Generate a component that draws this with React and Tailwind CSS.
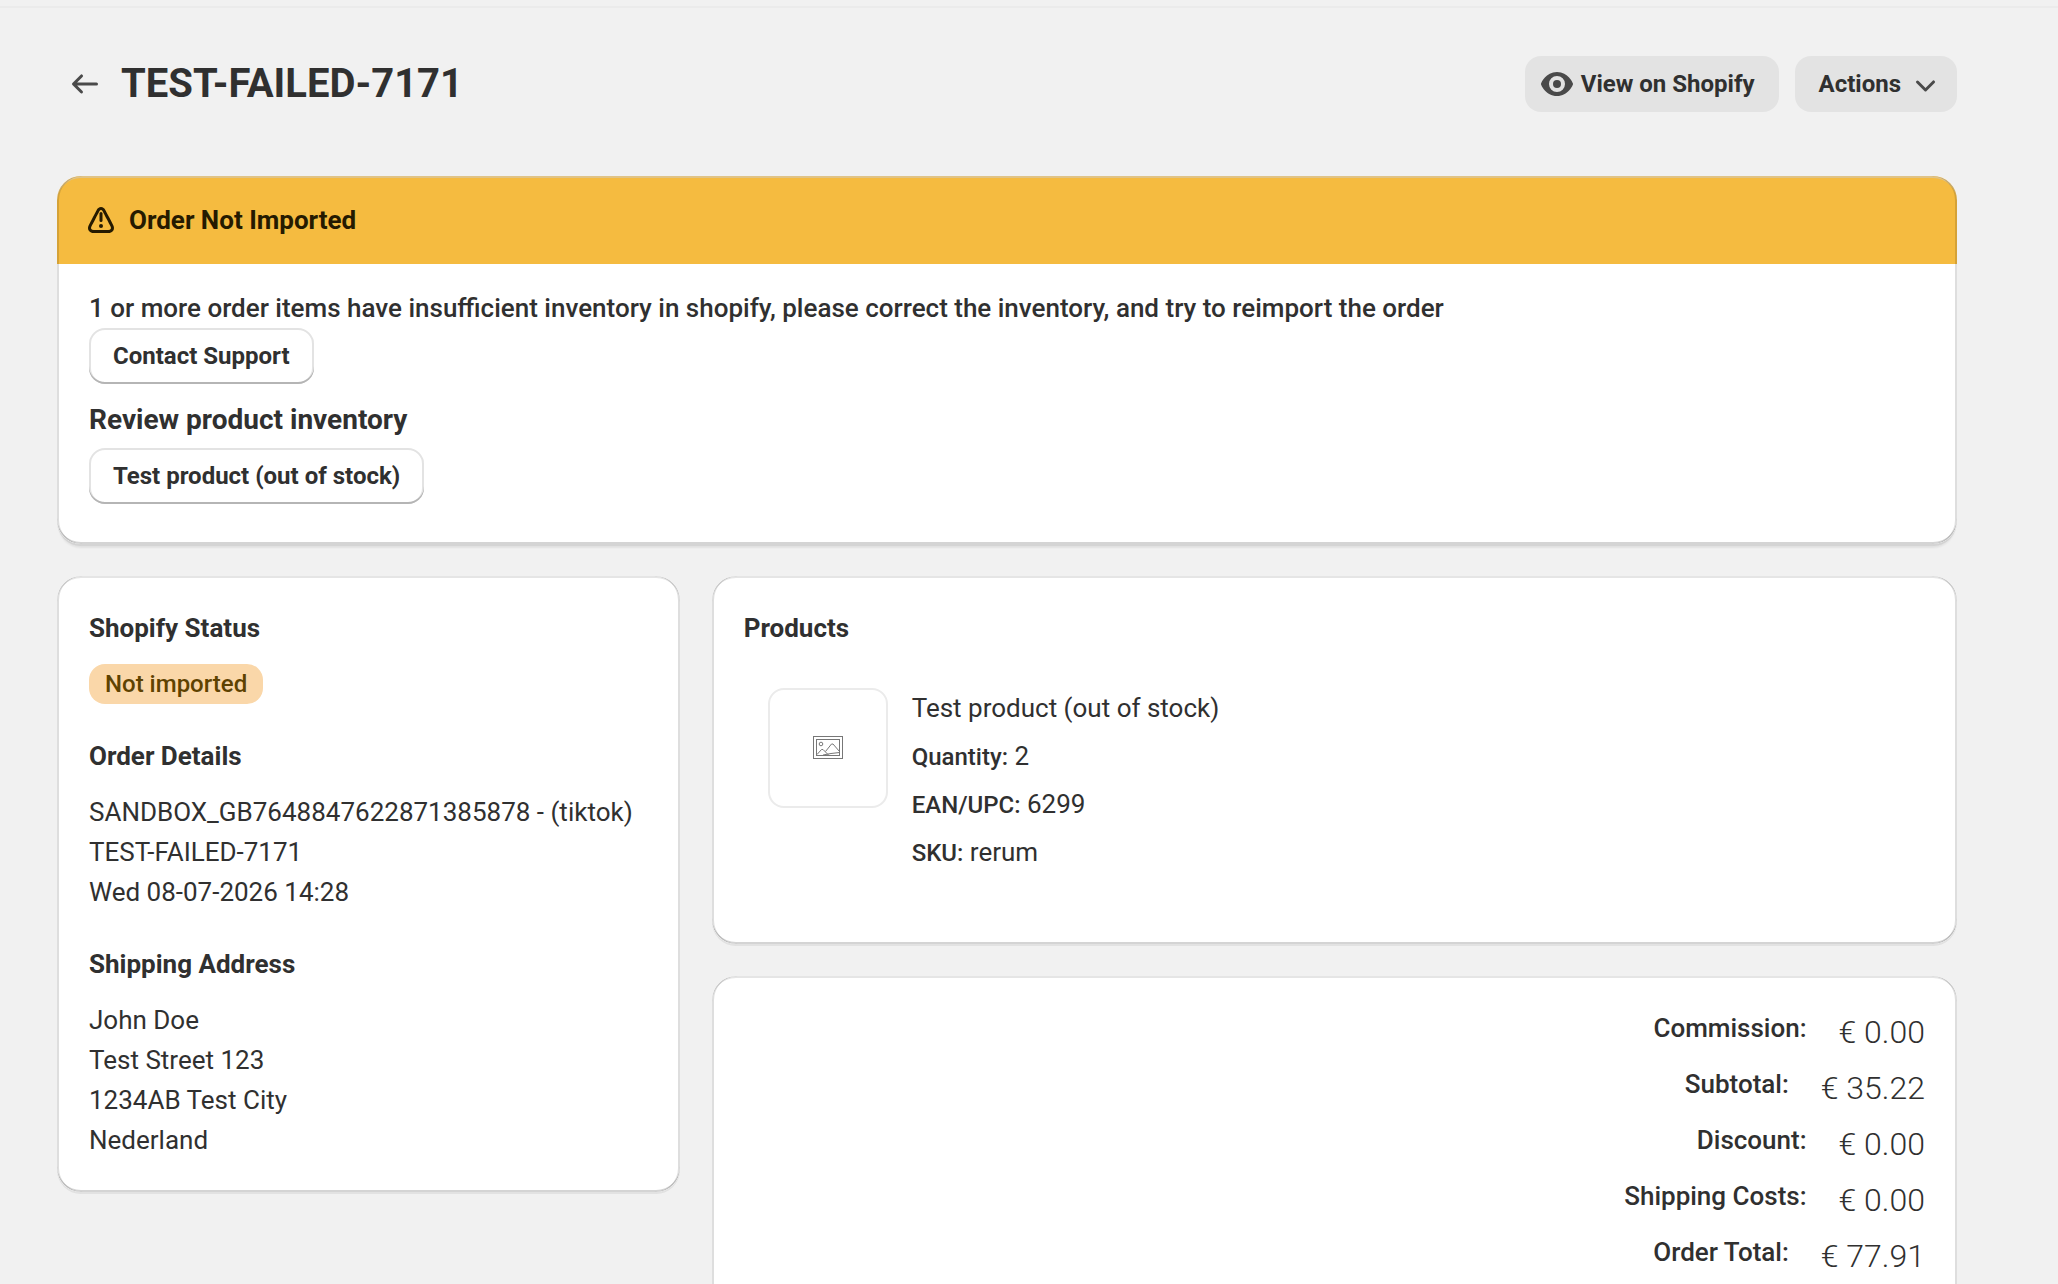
const order = {
  name: "TEST-FAILED-7171",
  details: ["SANDBOX_GB7648847622871385878 - (tiktok)", "TEST-FAILED-7171", "Wed 08-07-2026 14:28"],
  address: ["John Doe", "Test Street 123", "1234AB Test City", "Nederland"],
  product: {
    title: "Test product (out of stock)",
    fields: [
      { label: "Quantity:", value: "2" },
      { label: "EAN/UPC:", value: "6299" },
      { label: "SKU:", value: "rerum" },
    ],
  },
  totals: [
    { label: "Commission:", value: "€ 0.00" },
    { label: "Subtotal:", value: "€ 35.22" },
    { label: "Discount:", value: "€ 0.00" },
    { label: "Shipping Costs:", value: "€ 0.00" },
    { label: "Order Total:", value: "€ 77.91" },
  ],
};

function ArrowLeftIcon() {
  return (
    <svg viewBox="0 0 20 20" className="size-10" fill="#4a4a4a" aria-hidden="true">
      <path fillRule="evenodd" d="M16.5 10a.75.75 0 0 1-.75.75h-9.69l2.72 2.72a.75.75 0 0 1-1.06 1.06l-4-4a.75.75 0 0 1 0-1.06l4-4a.75.75 0 1 1 1.06 1.06l-2.72 2.72h9.69a.75.75 0 0 1 .75.75Z" />
    </svg>
  );
}

function EyeIcon() {
  return (
    <svg viewBox="0 0 20 20" className="size-10" fill="#4a4a4a" aria-hidden="true">
      <path fillRule="evenodd" d="M17.93 9.63C17.85 9.43 15.65 4 10 4S2.15 9.43 2.07 9.63a1 1 0 0 0 0 .74C2.15 10.57 4.35 16 10 16s7.85-5.43 7.93-5.63a1 1 0 0 0 0-.74ZM10 14a4 4 0 1 1 0-8 4 4 0 0 1 0 8Z" />
      <circle cx="10" cy="10" r="2" />
    </svg>
  );
}

function ChevronDownIcon() {
  return (
    <svg viewBox="0 0 20 20" className="size-10" fill="#4a4a4a" aria-hidden="true">
      <path fillRule="evenodd" d="M5.72 8.47a.75.75 0 0 1 1.06 0l3.47 3.47 3.47-3.47a.75.75 0 1 1 1.06 1.06l-4 4a.75.75 0 0 1-1.06 0l-4-4a.75.75 0 0 1 0-1.06Z" />
    </svg>
  );
}

function AlertIcon() {
  return (
    <svg viewBox="0 0 20 20" className="size-10" fill="#251a00" aria-hidden="true">
      <path d="M10 6a.75.75 0 0 1 .75.75v3.5a.75.75 0 0 1-1.5 0v-3.5A.75.75 0 0 1 10 6Z" />
      <path d="M11 13a1 1 0 1 1-2 0 1 1 0 0 1 2 0Z" />
      <path fillRule="evenodd" d="M10 3.5c-1.045 0-1.784.702-2.152 1.447a449.26 449.26 0 0 1-2.005 3.847l-.028.052a403.426 403.426 0 0 0-2.008 3.856c-.372.752-.478 1.75.093 2.614.57.863 1.542 1.184 2.464 1.184h7.272c.922 0 1.895-.32 2.464-1.184.57-.864.465-1.862.093-2.614a402.6 402.6 0 0 0-2.03-3.899l-.007-.013a444.43 444.43 0 0 1-2.004-3.843C11.784 4.202 11.045 3.5 10 3.5Zm-.808 2.112c.404-.816 1.212-.816 1.616 0 .526 1.064 1.263 2.465 2.017 3.898l.006.011c.74 1.408 1.494 2.844 2.018 3.846.404.816 0 1.633-1.213 1.633H6.364c-1.212 0-1.616-.817-1.212-1.633.527-1.065 1.266-2.47 2.024-3.911 .752-1.43 1.49-2.832 2.016-3.844Z" />
    </svg>
  );
}

function MissingImageIcon() {
  return (
    <svg viewBox="0 0 30 24" className="h-6 w-[30px]" fill="none" stroke="#777" strokeWidth="1" aria-hidden="true">
      <rect x="0.5" y="0.5" width="29" height="22" />
      <rect x="3.500" y="3.500" width="23" height="16" />
      <circle cx="8" cy="8" r="1.800" />
      <path d="M4 18.500L8.500 13.500H10L15.500 19M12.500 15.500L18.500 8H20L26.500 15.500M10 19L18 17.500L26.500 16.500" />
    </svg>
  );
}

function Card({ className = "", children }) {
  return (
    <section
      className={`relative overflow-hidden rounded-3xl bg-white after:pointer-events-none after:absolute after:inset-0 after:rounded-3xl after:shadow-[inset_2px_0_0_rgba(0,0,0,0.13),inset_-2px_0_0_rgba(0,0,0,0.13),inset_0_-2px_0_rgba(0,0,0,0.17),inset_0_2px_0_rgba(204,204,204,0.5)] ${className}`}
    >
      {children}
    </section>
  );
}

function OutlineButton({ children }) {
  return (
    <button
      type="button"
      className="h-14 rounded-2xl bg-white px-6 text-2xl font-bold shadow-[inset_0_-2px_0_#b5b5b5,inset_0_0_0_2px_#e3e3e3]"
    >
      {children}
    </button>
  );
}

function Section({ title, children }) {
  return (
    <div className="flex flex-col items-start gap-4">
      <h2 className="text-[26px] leading-10 font-bold">{title}</h2>
      {children}
    </div>
  );
}

export default function App() {
  return (
    <div className="h-screen overflow-y-auto bg-[#f1f1f1] pt-1.5 font-[Roboto,sans-serif] text-[26px] leading-10 text-[#303030] [scrollbar-width:none]">
      <div className="border-t-2 border-[#ebebeb] pt-12 pr-[101px] pl-[57px]">
        {/* Page header */}
        <header className="flex items-center justify-between pl-2">
          <div className="flex items-center gap-4">
            <a href="#orders" aria-label="Back to orders">
              <ArrowLeftIcon />
            </a>
            <h1 className="text-[40px] leading-12 font-bold">{order.name}</h1>
          </div>
          <div className="flex gap-4 text-2xl font-bold">
            <button type="button" className="flex h-14 items-center gap-1 rounded-2xl bg-[#e3e3e3] pr-6 pl-3">
              <EyeIcon />
              View on Shopify
            </button>
            <button type="button" className="flex h-14 items-center gap-1 rounded-2xl bg-[#e3e3e3] pr-3 pl-6">
              Actions
              <ChevronDownIcon />
            </button>
          </div>
        </header>

        <main className="flex flex-col gap-8 pt-16 pb-8">
          {/* Import warning */}
          <div className="rounded-3xl shadow-[0_2px_0_rgba(26,26,26,0.07),0_6px_2px_-2px_rgba(26,26,26,0.07)]">
            <Card>
              <div className="flex items-center gap-2 bg-[#f5bb40] p-6 text-[#251a00]">
                <AlertIcon />
                <h2 className="font-bold">Order Not Imported</h2>
              </div>
              <div className="flex flex-col items-start px-8 pt-6 pb-10">
                <p className="font-medium">
                  1 or more order items have insufficient inventory in shopify, please correct the inventory, and try to reimport the order
                </p>
                <OutlineButton>Contact Support</OutlineButton>
                <h3 className="pt-4 pb-2 text-[28px] leading-10 font-bold">Review product inventory</h3>
                <OutlineButton>{order.product.title}</OutlineButton>
              </div>
            </Card>
          </div>

          <div className="grid grid-cols-[1fr_2fr] items-start gap-8">
            <div className="rounded-3xl shadow-[0_2px_0_rgba(26,26,26,0.07)]">
              <Card className="flex flex-col gap-8 p-8">
                <Section title="Shopify Status">
                  <span className="rounded-2xl bg-[#fad7a9] px-4 text-2xl leading-10 font-medium text-[#5e4200]">Not imported</span>
                </Section>
                <Section title="Order Details">
                  <div>
                    {order.details.map(line => <p key={line}>{line}</p>)}
                  </div>
                </Section>
                <Section title="Shipping Address">
                  <address className="not-italic">
                    {order.address.map(line => <p key={line}>{line}</p>)}
                  </address>
                </Section>
              </Card>
            </div>

            <div className="flex flex-col gap-8">
              <div className="rounded-3xl shadow-[0_2px_0_rgba(26,26,26,0.07)]">
                <Card className="px-8 pt-8 pb-12">
                  <Section title="Products">
                    <div className="flex items-start gap-6 p-6">
                      <div className="flex size-30 items-center justify-center rounded-2xl border-2 border-[#ebebeb]">
                        <MissingImageIcon />
                      </div>
                      <div className="flex flex-col gap-2">
                        <p>{order.product.title}</p>
                        {order.product.fields.map(field => (
                          <p key={field.label}>
                            <span className="text-2xl leading-8 font-medium">{field.label}</span> {field.value}
                          </p>
                        ))}
                      </div>
                    </div>
                  </Section>
                </Card>
              </div>

              <div className="rounded-3xl shadow-[0_2px_0_rgba(26,26,26,0.07)]">
                <Card className="flex flex-col gap-2 p-8">
                  {order.totals.map(row => (
                    <div key={row.label} className="flex items-start justify-end gap-8">
                      <span className="font-medium">{row.label}</span>
                      <span className="text-[32px] leading-12 font-light">{row.value}</span>
                    </div>
                  ))}
                </Card>
              </div>
            </div>
          </div>
        </main>
      </div>
    </div>
  );
}
